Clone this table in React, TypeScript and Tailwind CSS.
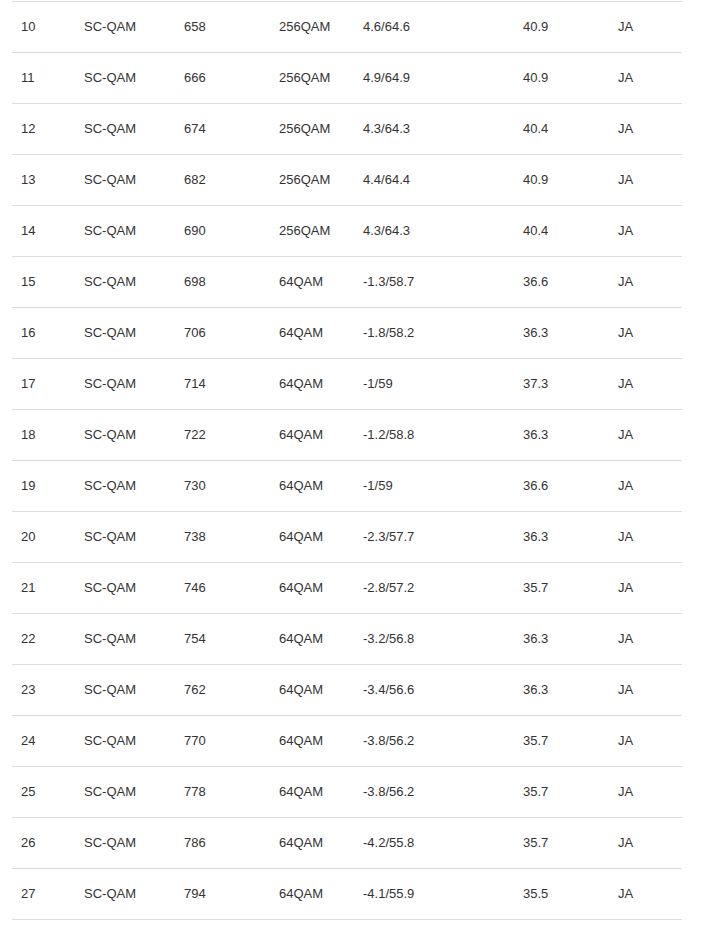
import React from "react";

const rows: [string, string, string, string, string, string, string][] = [
  ["10", "SC-QAM", "658", "256QAM", "4.6/64.6", "40.9", "JA"],
  ["11", "SC-QAM", "666", "256QAM", "4.9/64.9", "40.9", "JA"],
  ["12", "SC-QAM", "674", "256QAM", "4.3/64.3", "40.4", "JA"],
  ["13", "SC-QAM", "682", "256QAM", "4.4/64.4", "40.9", "JA"],
  ["14", "SC-QAM", "690", "256QAM", "4.3/64.3", "40.4", "JA"],
  ["15", "SC-QAM", "698", "64QAM", "-1.3/58.7", "36.6", "JA"],
  ["16", "SC-QAM", "706", "64QAM", "-1.8/58.2", "36.3", "JA"],
  ["17", "SC-QAM", "714", "64QAM", "-1/59", "37.3", "JA"],
  ["18", "SC-QAM", "722", "64QAM", "-1.2/58.8", "36.3", "JA"],
  ["19", "SC-QAM", "730", "64QAM", "-1/59", "36.6", "JA"],
  ["20", "SC-QAM", "738", "64QAM", "-2.3/57.7", "36.3", "JA"],
  ["21", "SC-QAM", "746", "64QAM", "-2.8/57.2", "35.7", "JA"],
  ["22", "SC-QAM", "754", "64QAM", "-3.2/56.8", "36.3", "JA"],
  ["23", "SC-QAM", "762", "64QAM", "-3.4/56.6", "36.3", "JA"],
  ["24", "SC-QAM", "770", "64QAM", "-3.8/56.2", "35.7", "JA"],
  ["25", "SC-QAM", "778", "64QAM", "-3.8/56.2", "35.7", "JA"],
  ["26", "SC-QAM", "786", "64QAM", "-4.2/55.8", "35.7", "JA"],
  ["27", "SC-QAM", "794", "64QAM", "-4.1/55.9", "35.5", "JA"],
];

export default function App() {
  return (
    <div
      className="w-[725px] h-[926px] bg-white text-[13px] text-[#333]"
      style={{ fontFamily: '"Liberation Sans", Arial, sans-serif' }}
    >
      <div className="ml-[12px] mt-px w-[670px] border-b border-[#dddddd]">
        {rows.map((r) => (
          <div key={r[0]} className="flex h-[51px] items-center border-t border-[#dddddd]">
            <div className="w-[63px] pl-[9px]">{r[0]}</div>
            <div className="w-[100px] pl-[9px]">{r[1]}</div>
            <div className="w-[95px] pl-[9px]">{r[2]}</div>
            <div className="w-[84px] pl-[9px]">{r[3]}</div>
            <div className="w-[160px] pl-[9px]">{r[4]}</div>
            <div className="w-[95px] pl-[9px]">{r[5]}</div>
            <div className="w-[73px] pl-[9px]">{r[6]}</div>
          </div>
        ))}
      </div>
    </div>
  );
}
